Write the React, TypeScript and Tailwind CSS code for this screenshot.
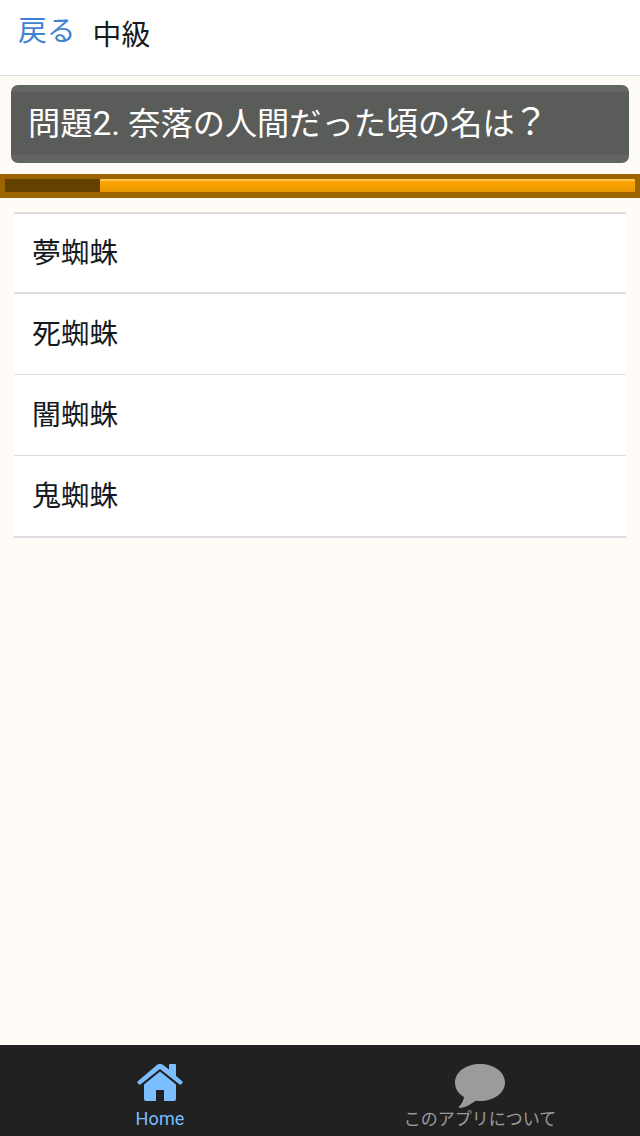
const choices = ['夢蜘蛛', '死蜘蛛', '闇蜘蛛', '鬼蜘蛛'];
const rowStyles = [
  'h-[82px] border-y-2 pt-px',
  'h-[81px] border-b pt-px',
  'h-[81px] border-b pt-px',
  'h-[82px] border-b-2 pt-px',
];

const timer = { elapsed: 95, total: 630 };

function Header() {
  return (
    <header className="flex h-[76px] items-start border-b border-[#dddddd] bg-white pl-[18px] text-[28.8px] leading-[40px]">
      <a href="#" className="mt-[11px] text-[#3f83d1]">
        戻る
      </a>
      <h1 className="mt-[15px] ml-[17px] text-[#151a1e]">中級</h1>
    </header>
  );
}

function Question() {
  return (
    <div className="mx-[11px] mt-[9px] h-[78px] overflow-hidden rounded-[7px] bg-[#636562] pt-[7px] pb-2">
      <p className="h-[63px] bg-[#5a5c59] pl-[17px] text-[32.2px] leading-[63px] whitespace-nowrap text-white">
        問題<span className="text-[33.5px]">2. </span>奈落の人間だった頃の名は
        <span className="-ml-[2px] text-[36px] leading-none">？</span>
      </p>
    </div>
  );
}

function TimerBar() {
  return (
    <div className="mt-[11px] h-6 bg-[#9c6500] px-[5px] pt-[5px] pb-[6px]">
      <div className="flex h-[13px]">
        <div
          className="bg-[#634100]"
          style={{ width: `${(timer.elapsed / timer.total) * 100}%` }}
        />
        <div className="flex-1 border-t-2 border-[#ffc35a] bg-gradient-to-b from-[#ffa600] to-[#e79600]" />
      </div>
    </div>
  );
}

function TabBar() {
  return (
    <nav className="grid h-[91px] grid-cols-2 bg-[#212121] text-[18px] leading-[24px]">
      <a href="#" className="flex flex-col items-center text-[#7bbeff]">
        <svg className="mt-[18px] h-[39px] w-[46px]" viewBox="0 0 46 39" fill="currentColor">
          <path d="M20.500 1.500Q23 0 25.500 1.500L32 6.500V2Q32 1 33 1H38Q39 1 39 2V13L45.500 18.500Q46 20 44.500 21 43 22 42 21L23 6 4 21Q3 22 1.500 21 0 20 .5 18.500Z" />
          <path d="M23 8.500 39 21.500V36Q39 38 37 38H27V27H19V38H9Q7 38 7 36V21.500Z" />
        </svg>
        <span className="mt-[5px] tracking-[0.1px]">Home</span>
      </a>
      <a href="#" className="flex flex-col items-center text-[#9c9a9c]">
        <svg className="mt-[19px] h-[44px] w-[50px]" viewBox="0 0 50 44" fill="currentColor">
          <path d="M25 0C39 0 50 8 50 18.500S39 37 25 37L21 36.700C16 39.500 11 44 4 44V42.500Q8 39 9 33C3.500 30 0 24.500 0 18.500 0 8 11 0 25 0Z" />
        </svg>
        <span className="-mt-px text-[17px] whitespace-nowrap">このアプリについて</span>
      </a>
    </nav>
  );
}

export default function App() {
  return (
    <div className="flex h-[1136px] w-[640px] flex-col bg-[#fffbf7] font-[Roboto,'Noto_Sans_CJK_JP',sans-serif]">
      <Header />
      <main className="flex-1">
        <Question />
        <TimerBar />
        <ul className="mx-[14px] mt-[14px] bg-white">
          {choices.map((choice, i) => (
            <li
              key={choice}
              className={`flex items-center border-[#dedbde] pl-[18px] text-[28.8px] text-[#151a1e] ${rowStyles[i]}`}
            >
              {choice}
            </li>
          ))}
        </ul>
      </main>
      <TabBar />
    </div>
  );
}
